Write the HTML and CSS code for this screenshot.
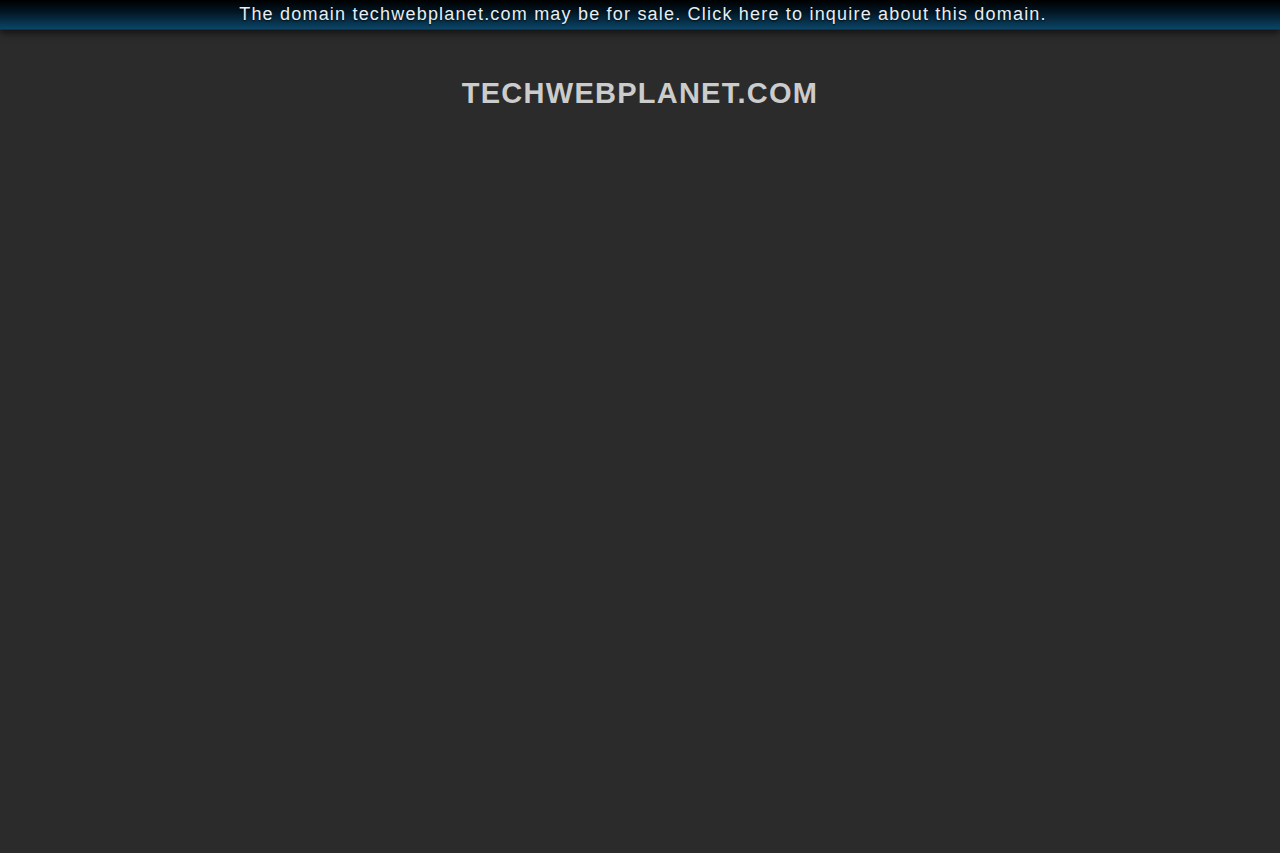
FILE: index.html
```html
<!DOCTYPE html>
<html>
<head>
<meta charset="utf-8">
<link rel="stylesheet" href="styles.css">
</head>
<body>
<div class="topbar"><a class="sale" href="#">The domain techwebplanet.com may be for sale. Click here to inquire about this domain.</a></div>
<h1 class="title">TECHWEBPLANET.COM</h1>
</body>
</html>
```
FILE: styles.css
```css
html, body {
  margin: 0;
  padding: 0;
  background: #2b2b2b;
  height: 100%;
}
body {
  font-family: "Liberation Sans", Arial, sans-serif;
}
.topbar {
  height: 29px;
  background: linear-gradient(to bottom, #000000 0%, #021522 40%, #0b4567 100%);
  box-shadow: 0 3px 7px rgba(0,0,0,0.6);
  border-bottom: 1px solid #1a2f3c;
  text-align: center;
  position: relative;
  z-index: 1;
}
.sale {
  display: inline-block;
  padding-left: 6px;
  color: #e8eef2;
  text-decoration: none;
  font-size: 18px;
  letter-spacing: 1.2px;
  line-height: 28px;
  text-shadow: 0 1px 2px rgba(0,0,0,0.8);
}
.title {
  margin: 45px 0 0;
  text-align: center;
  color: #cccccc;
  font-size: 29px;
  font-weight: bold;
  letter-spacing: 1.25px;
  line-height: 36px;
}
```
